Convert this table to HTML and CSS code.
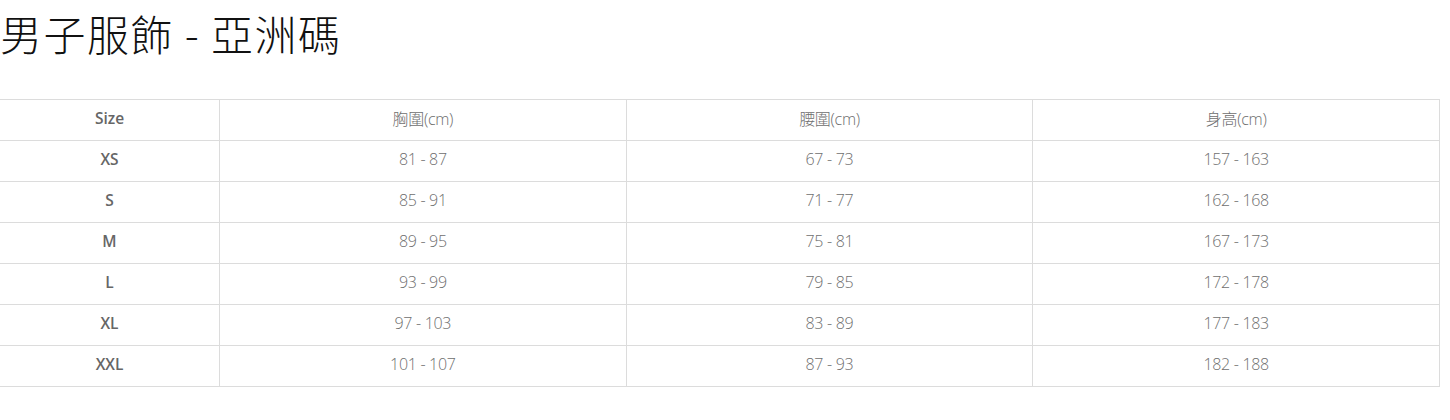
FILE: index.html
```html
<!DOCTYPE html>
<html lang="zh-Hant">
<head>
<meta charset="utf-8">
<link rel="stylesheet" href="styles.css">
</head>
<body>
<h1 class="title">男子服飾 - 亞洲碼</h1>
<table class="size-table">
  <thead>
    <tr><th class="size-col">Size</th><th>胸圍(cm)</th><th>腰圍(cm)</th><th>身高(cm)</th></tr>
  </thead>
  <tbody>
    <tr><td class="size-col">XS</td><td>81 - 87</td><td>67 - 73</td><td>157 - 163</td></tr>
    <tr><td class="size-col">S</td><td>85 - 91</td><td>71 - 77</td><td>162 - 168</td></tr>
    <tr><td class="size-col">M</td><td>89 - 95</td><td>75 - 81</td><td>167 - 173</td></tr>
    <tr><td class="size-col">L</td><td>93 - 99</td><td>79 - 85</td><td>172 - 178</td></tr>
    <tr><td class="size-col">XL</td><td>97 - 103</td><td>83 - 89</td><td>177 - 183</td></tr>
    <tr><td class="size-col">XXL</td><td>101 - 107</td><td>87 - 93</td><td>182 - 188</td></tr>
  </tbody>
</table>
</body>
</html>
```
FILE: styles.css
```css
html, body {
  margin: 0;
  padding: 0;
  background: #fff;
}
body {
  font-family: "Open Sans", "Noto Sans CJK TC", sans-serif;
}
.title {
  margin: 0;
  padding-top: 7px;
  height: 99px;
  box-sizing: border-box;
  font-family: "Noto Sans CJK TC", sans-serif;
  font-weight: 300;
  font-size: 42px;
  letter-spacing: 1.5px;
  line-height: 52px;
  color: #111;
}
.size-table {
  border-collapse: collapse;
  width: 1441px;
  margin-left: -1px;
  table-layout: fixed;
}
.size-table th,
.size-table td {
  border: 1px solid #dcdcdc;
  height: 36px;
  padding: 0 0 4px;
  text-align: center;
  vertical-align: middle;
  font-size: 16px;
  letter-spacing: -0.3px;
  font-weight: 300;
  color: #6e6e6e;
  font-family: "Open Sans", "Noto Sans CJK TC", sans-serif;
}
.size-table th {
  font-weight: 300;
}
.size-table .size-col {
  width: 219px;
  font-weight: 600;
  letter-spacing: 0;
  font-size: 15.5px;
  color: #666;
}
```
